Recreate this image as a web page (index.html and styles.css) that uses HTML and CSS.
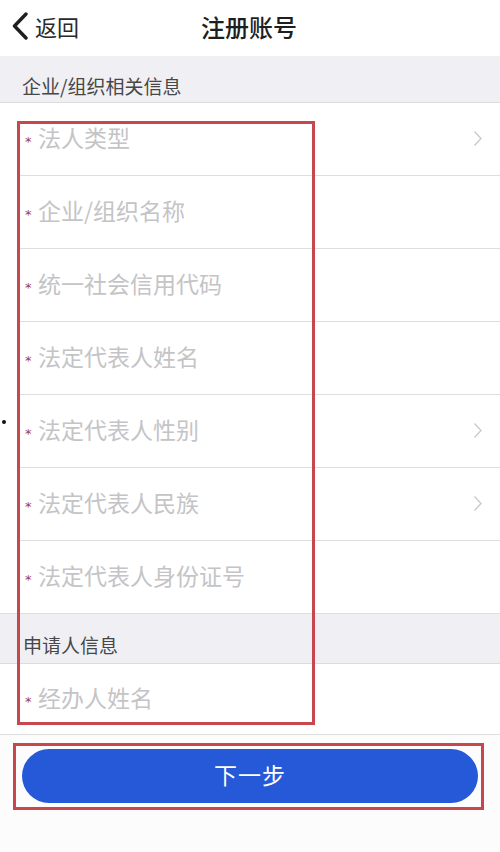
FILE: index.html
```html
<!DOCTYPE html>
<html lang="zh-CN">
<head>
<meta charset="utf-8">
<title>注册账号</title>
<link rel="stylesheet" href="styles.css">
</head>
<body>
<div class="page">
  <header class="navbar">
    <div class="back">
      <svg class="back-icon" width="18" height="28" viewBox="0 0 18 28"><path d="M15 2 L3.5 14 L15 26" fill="none" stroke="#1f1f1f" stroke-width="3.4" stroke-linecap="round" stroke-linejoin="round"/></svg>
      <span class="back-text">返回</span>
    </div>
    <div class="title">注册账号</div>
  </header>

  <div class="section-header first">企业/组织相关信息</div>
  <div class="list">
    <div class="row"><span class="star">*</span><span class="label">法人类型</span><svg class="chev" width="10" height="17" viewBox="0 0 10 17"><path d="M1.5 1.5 L8 8.5 L1.5 15.5" fill="none" stroke="#c8c8cc" stroke-width="1.3"/></svg></div>
    <div class="row"><span class="star">*</span><span class="label">企业/组织名称</span></div>
    <div class="row"><span class="star">*</span><span class="label">统一社会信用代码</span></div>
    <div class="row"><span class="star">*</span><span class="label">法定代表人姓名</span></div>
    <div class="row"><span class="star">*</span><span class="label">法定代表人性别</span><svg class="chev" width="10" height="17" viewBox="0 0 10 17"><path d="M1.5 1.5 L8 8.5 L1.5 15.5" fill="none" stroke="#c8c8cc" stroke-width="1.3"/></svg></div>
    <div class="row"><span class="star">*</span><span class="label">法定代表人民族</span><svg class="chev" width="10" height="17" viewBox="0 0 10 17"><path d="M1.5 1.5 L8 8.5 L1.5 15.5" fill="none" stroke="#c8c8cc" stroke-width="1.3"/></svg></div>
    <div class="row"><span class="star">*</span><span class="label">法定代表人身份证号</span></div>
  </div>

  <div class="section-header second">申请人信息</div>
  <div class="list">
    <div class="row short"><span class="star">*</span><span class="label">经办人姓名</span></div>
  </div>

  <div class="footer">
    <button class="next-btn">下一步</button>
  </div>

  <div class="mark mark-fields"></div>
  <div class="mark mark-button"></div>
  <div class="dot"></div>
</div>
</body>
</html>
```

FILE: styles.css
```css
* { box-sizing: border-box; }

html, body {
  margin: 0;
  padding: 0;
  background: #fcfcfc;
}

body {
  font-family: "Noto Sans CJK SC", "Noto Sans", sans-serif;
  width: 500px;
  height: 852px;
  overflow: hidden;
}

.page {
  position: relative;
  width: 500px;
  height: 852px;
}

.navbar {
  position: relative;
  height: 56px;
  background: #ffffff;
  display: flex;
  align-items: center;
  justify-content: center;
}

.back {
  position: absolute;
  left: 11px;
  top: 12px;
  display: flex;
  align-items: center;
  gap: 6px;
}

.back-icon { display: block; }

.back-text {
  font-size: 22px;
  color: #2a2a2a;
  line-height: 28px;
}

.title {
  font-size: 24px;
  font-weight: 500;
  color: #1e1e1e;
  margin-top: -4px;
  margin-left: -2px;
}

.section-header {
  background: #f0f0f4;
  color: #474747;
  font-size: 19px;
  padding-left: 22px;
  display: flex;
  align-items: center;
  border-bottom: 1px solid #dcdcdf;
}

.section-header.first {
  height: 47px;
  padding-top: 12px;
}

.section-header.second {
  height: 50px;
  padding-top: 12px;
  padding-left: 23px;
}

.list {
  background: #ffffff;
}

.row {
  height: 73px;
  display: flex;
  align-items: center;
  padding-left: 25px;
  padding-right: 17px;
  position: relative;
}

.row::after {
  content: "";
  position: absolute;
  left: 20px;
  right: 0;
  bottom: 0;
  height: 1px;
  background: #dededf;
}

.row:last-child::after { left: 0; }

.row.short {
  height: 71px;
}

.star {
  color: #9a3b55;
  font-size: 13px;
  width: 13px;
  margin-top: 3px;
  font-family: "DejaVu Sans", sans-serif;
}

.label {
  font-size: 23px;
  color: #c4c4c6;
  flex: 1;
  margin-top: -5px;
}

.chev { display: block; margin-top: -3px; }

.footer {
  padding-top: 14px;
  display: flex;
  justify-content: center;
}

.next-btn {
  width: 456px;
  height: 54px;
  border: none;
  border-radius: 27px;
  background: #2559d7;
  color: #ffffff;
  font-family: "Noto Sans CJK SC", "Noto Sans", sans-serif;
  font-size: 23px;
  letter-spacing: 1px;
  padding: 0 0 4px;
}

.mark {
  position: absolute;
  border: 3px solid #c8474c;
  pointer-events: none;
}

.mark-fields {
  left: 17px;
  top: 121px;
  width: 298px;
  height: 604px;
}

.mark-button {
  left: 13px;
  top: 743px;
  width: 471px;
  height: 67px;
}

.dot {
  position: absolute;
  left: 2px;
  top: 420px;
  width: 4px;
  height: 4px;
  border-radius: 50%;
  background: #111;
}
```
